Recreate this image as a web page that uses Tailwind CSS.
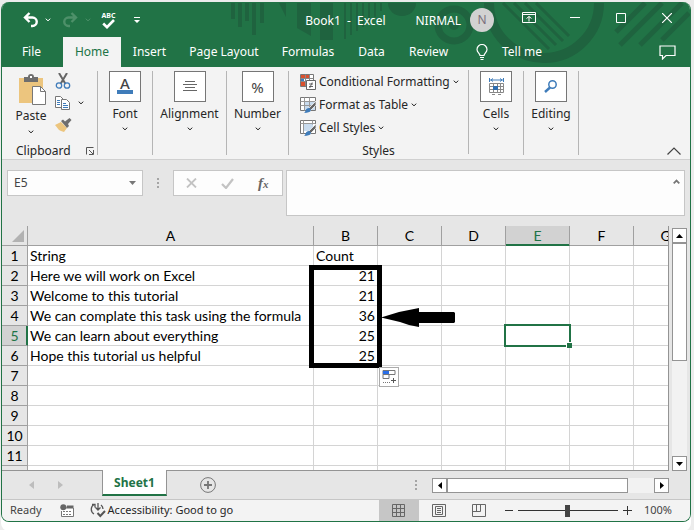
<!DOCTYPE html>
<html lang="en">
<head>
    <meta charset="UTF-8" />
    <meta name="viewport" content="width=device-width, initial-scale=1.0" />
    <title>Book1 - Excel</title>
    <script src="https://cdn.jsdelivr.net/npm/@tailwindcss/browser@4"></script>
</head>
<body class="bg-white font-['Noto_Sans','Open_Sans',sans-serif] text-xs text-[#262626]">
    <svg class="hidden">
        <symbol id="chev" viewBox="0 0 6 4"><path d="M.7 .7 3 2.800 5.300 .7" fill="none" stroke="currentColor" stroke-width="1" /></symbol>
    </svg>

    <div class="h-screen bg-[#ececec] pt-[2px] pr-[3px] pb-[8px] pl-px">
    <div class="flex h-full flex-col overflow-hidden rounded-lg border border-t-0 border-[#217346] bg-[#e6e6e6] shadow-[0_9px_0_0_white]">

        <!-- Title bar and tabs -->
        <header class="relative shrink-0 bg-[#217346] text-white">
            <svg class="absolute top-0 right-0 h-[65px] w-[460px]" viewBox="230 0 460 65" fill="none" stroke="#1f633f">
                <path d="M233 1v16M240 1v24M247 1v18M254 1v32M262 1v20" stroke-width="4" />
                <path d="M279 1h7v14zM297 1h14v33l-14-8zM320 1h13v37h-13z" fill="#1f633f" stroke="none" />
                <path d="M345 1v36M351 1v32M357 1v28M363 1v24M369 1v19M375 1v14M381 1v8" stroke-width="2" />
                <path d="M388 1h28a14 13 0 0 1-28 0z" fill="#1f633f" stroke="none" />
                <circle cx="454" cy="23" r="16" stroke-width="7" />
                <circle cx="454" cy="23" r="5" fill="#1f633f" stroke="none" />
                <path d="M489 1a55 55 0 0 0 110 0" stroke-width="10" />
                <path d="M503 1l46 46M514 1l42 42M525 1l38 38M536 1l33 33" stroke-width="3" />
                <path d="M620 43l42-42M640 43l42-42M616 30l29-29M662 38l27-27" stroke-width="5" />
            </svg>
            <div class="relative flex h-[35px] items-center">
                <button aria-label="Undo" class="ml-[21px]"><svg width="16" height="16" viewBox="0 0 16 16" fill="none" stroke="white" stroke-width="2.400"><path d="M6.500 1 2 5.500 6.500 10M2 5.500h7.500a4.200 4.200 0 0 1 0 8.500H8" /></svg></button>
                <button aria-label="Undo list" class="ml-[6px]"><svg width="6" height="4"><use href="#chev" /></svg></button>
                <button aria-label="Redo" class="ml-[11px]"><svg width="16" height="16" viewBox="0 0 16 16" fill="none" stroke="#4d9069" stroke-width="2.400"><path d="M9.500 1 14 5.500 9.500 10M14 5.500H6.500a4.200 4.200 0 0 0 0 8.500H8" /></svg></button>
                <button aria-label="Redo list" class="ml-[7px] text-[#4d9069]"><svg width="6" height="4"><use href="#chev" /></svg></button>
                <button aria-label="Spelling" class="ml-[10px] flex w-[15px] flex-col items-center pt-px">
                    <span class="text-[7px] leading-[7px] font-bold">ABC</span>
                    <svg width="13" height="10" viewBox="0 0 13 10"><path d="M1.200 4.500 5 8.200 12 1" fill="none" stroke="white" stroke-width="2.600" /></svg>
                </button>
                <button aria-label="Customize toolbar" class="ml-[18px] pt-[2px]"><svg width="6" height="7" viewBox="0 0 6 7"><path d="M0 0h6v1H0zM0 3h6L3 6z" fill="white" /></svg></button>
                <span class="flex-1"></span>
                <span class="pt-[2px] whitespace-pre">Book1  -  Excel</span>
                <span class="ml-[30px] pt-[2px]">NIRMAL</span>
                <span class="ml-[9px] flex size-6 items-center justify-center rounded-full bg-[#d2d2d2] text-[#7b6f7b]">N</span>
                <button aria-label="Ribbon options" class="ml-[28px] pb-[3px]"><svg width="14" height="12" viewBox="0 0 14 12" fill="none" stroke="white"><path d="M.5 .5h13v10H.5zM.5 2.500h13M7 9.500V4.500M4.500 6.500 7 4.500l2.500 2" /></svg></button>
                <button aria-label="Minimize" class="ml-[34px] pb-[5px]"><svg width="10" height="10" viewBox="0 0 10 10"><path d="M0 5.500h10" stroke="white" /></svg></button>
                <button aria-label="Maximize" class="ml-[36px] pb-[3px]"><svg width="10" height="10" viewBox="0 0 10 10"><path d="M.5 .5h9v9h-9z" fill="none" stroke="white" /></svg></button>
                <button aria-label="Close" class="mr-[18px] ml-[36px] pb-[3px]"><svg width="10" height="10" viewBox="0 0 10 10"><path d="M0 0 10 10M10 0 0 10" stroke="white" stroke-width="1.200" /></svg></button>
            </div>
            <nav class="relative flex h-[30px] items-center text-center leading-[30px]">
                <a href="#" class="w-[59px]">File</a>
                <a href="#" class="ml-[2px] w-[58px] bg-[#f3f3f3] text-[#217346]">Home</a>
                <a href="#" class="w-[57px]">Insert</a>
                <a href="#" class="w-[92px]">Page Layout</a>
                <a href="#" class="w-[76px]">Formulas</a>
                <a href="#" class="w-[51px]">Data</a>
                <a href="#" class="w-[63px]">Review</a>
                <a href="#" class="flex items-center gap-[14px] pl-[16px]">
                    <svg width="12" height="17" viewBox="0 0 12 17" fill="none" stroke="white" stroke-width="1.200"><path d="M4 11.500C4 9.500 1 8.500 1 5.500a5 5 0 0 1 10 0c0 3-3 4-3 6zM4 13.500h4M4.500 15.500h3" /></svg>
                    Tell me
                </a>
                <button aria-label="Comments" class="mr-[14px] ml-auto"><svg width="17" height="15" viewBox="0 0 17 15" fill="none" stroke="white" stroke-width="1.200"><path d="M1 1h15v9.500H7L3.500 14v-3.500H1z" /></svg></button>
            </nav>
        </header>

        <!-- Ribbon -->
        <section class="relative flex h-[93px] shrink-0 items-start border-b border-[#d0d0d0] bg-[#f3f3f3] pt-[4px] [&>div]:h-[84px]">
            <div class="relative w-[96px] border-r border-[#b5b5b5]">
                <div class="flex pl-[14px]">
                    <button class="flex w-[30px] flex-col items-center pt-[3px]">
                        <svg width="30" height="31" viewBox="0 0 30 31">
                            <path d="M3 4h24v25H3z" fill="#ecc57e" />
                            <path d="M8 3h4a3 3 0 0 1 6 0h4v5H8z" fill="#6e6e6e" /><path d="M14 2h2v2h-2z" fill="#fff" />
                            <path d="M16.500 12.500h8l5 5v13h-13z" fill="#fff" stroke="#777" /><path d="M24.500 12.500v5h5" fill="none" stroke="#777" />
                        </svg>
                        <span class="leading-[22px]">Paste</span>
                        <svg class="mt-[3px]" width="6" height="4"><use href="#chev" /></svg>
                    </button>
                    <div class="ml-[9px] flex flex-col gap-[6px] pt-[2px]">
                        <button aria-label="Cut"><svg width="16" height="16" viewBox="0 0 16 16" fill="none"><path d="M4 0 10.500 11M12 0 5.500 11" stroke="#666" stroke-width="2" /><circle cx="4" cy="12.500" r="2.700" stroke="#3f7cba" stroke-width="1.300" /><circle cx="12" cy="12.500" r="2.700" stroke="#3f7cba" stroke-width="1.300" /></svg></button>
                        <button aria-label="Copy" class="flex items-center gap-[7px]">
                            <svg width="16" height="16" viewBox="0 0 16 16" fill="#fff" stroke="#777"><path d="M.5 1.500h5l3 3v8h-8z" /><path d="M6.500 4.500h5l3 3v7h-8z" /><path d="M2 5.500h3M2 7.500h3M2 9.500h3M8 8.500h3M8 10.500h5M8 12.500h5" stroke="#3f7cba" /></svg>
                            <svg width="6" height="4"><use href="#chev" /></svg>
                        </button>
                        <button aria-label="Format Painter"><svg width="17" height="16" viewBox="0 0 17 16"><path d="M0 8 6 5l6 6-3 4-3-1-2-1z" fill="#ecc57e" /><path d="M6 4 8 2.500l2 2L14.500 1 16.500 3 13 7l1 2-2 2z" fill="#6e6e6e" /></svg></button>
                    </div>
                </div>
                <p class="absolute bottom-[-5px] left-[14px] leading-[18px]">Clipboard</p>
                <button aria-label="Clipboard settings" class="absolute right-[2px] bottom-0"><svg class="block" width="9" height="8" viewBox="0 0 9 8" fill="none" stroke="#555"><path d="M.5 7.500V.5h7M3 3l4 4M7.500 3v4.500H3" /></svg></button>
            </div>
            <div class="w-[55px] border-r border-[#b5b5b5]">
                <button class="flex w-full flex-col items-center">
                    <span class="flex h-[31px] w-8 flex-col items-center border border-[#767676] bg-white pt-[5px] text-[15px] leading-[13px] font-medium text-[#444]">A<svg class="block" width="16" height="4"><path d="M0 0h16v4H0z" fill="#3f7cba" /></svg></span>
                    <span class="leading-6">Font</span><svg class="mt-px" width="6" height="4"><use href="#chev" /></svg>
                </button>
            </div>
            <div class="w-[74px] border-r border-[#b5b5b5]">
                <button class="flex w-full flex-col items-center">
                    <span class="flex h-[31px] w-8 items-center justify-center border border-[#767676] bg-white"><svg width="14" height="13" viewBox="0 0 14 13"><path d="M2 1.500h10M0 4.500h14M2 7.500h10M0 10.500h14" stroke="#666" /></svg></span>
                    <span class="leading-6">Alignment</span><svg class="mt-px" width="6" height="4"><use href="#chev" /></svg>
                </button>
            </div>
            <div class="w-[62px] border-r border-[#b5b5b5]">
                <button class="flex w-full flex-col items-center">
                    <span class="flex h-[31px] w-8 items-center justify-center border border-[#767676] bg-white text-[15px] text-[#444]">%</span>
                    <span class="leading-6">Number</span><svg class="mt-px" width="6" height="4"><use href="#chev" /></svg>
                </button>
            </div>
            <div class="-mt-px w-[180px] border-r border-[#b5b5b5] pl-[11px]">
                <button class="flex h-[23px] items-center gap-[3px] whitespace-nowrap">
                    <svg width="16" height="16" viewBox="0 0 16 16"><path d="M.5 .5h13v12H.5z" fill="#fff" stroke="#777" /><path d="M1 1h8v3H1zM1 8h4v4H1z" fill="#d9502e" /><path d="M1 5h3v2H1z" fill="#3f7cba" /><path d="M.5 4.500h13M.5 7.500h13M5.500 .5v12M9.500 .5v12" stroke="#888" fill="none" /><path d="M6.500 6.500h9v9h-9z" fill="#fff" stroke="#666" /><path d="M9 10h4M9 12.500h4M12.200 8.500l-2.500 5.500" stroke="#555" stroke-width=".9" /></svg>
                    Conditional Formatting <svg width="6" height="4"><use href="#chev" /></svg>
                </button>
                <button class="flex h-[23px] items-center gap-[3px] whitespace-nowrap">
                    <svg width="16" height="16" viewBox="0 0 16 16"><path d="M.5 .5h15v13H.5z" fill="#fff" stroke="#777" /><path d="M5 4h10v9H5z" fill="#c9dcef" /><path d="M.5 4.500h15M.5 8.500h15M4.500 .5v13M9.500 .5v13" stroke="#999" fill="none" /><path d="M16 4v4l-6 6-2-2z" fill="#666" stroke="#fff" stroke-width=".7" /><path d="M4 16c2-1 1-5 5-5 3 1 3 5-5 5z" fill="#3f7cba" /></svg>
                    Format as Table <svg width="6" height="4"><use href="#chev" /></svg>
                </button>
                <button class="flex h-[23px] items-center gap-[3px] whitespace-nowrap">
                    <svg width="16" height="16" viewBox="0 0 16 16"><path d="M.5 .5h15v13H.5z" fill="#fff" stroke="#777" /><path d="M4 4h9v7H4z" fill="#c9dcef" /><path d="M.5 3.500h15M3.500 .5v13M12.500 .5v4" stroke="#999" fill="none" /><path d="M16 4v4l-6 6-2-2z" fill="#666" stroke="#fff" stroke-width=".7" /><path d="M4 16c2-1 1-5 5-5 3 1 3 5-5 5z" fill="#3f7cba" /></svg>
                    Cell Styles <svg width="6" height="4"><use href="#chev" /></svg>
                </button>
                <p class="pt-[3px] pr-[11px] text-center leading-[18px]">Styles</p>
            </div>
            <div class="w-[55px] border-r border-[#b5b5b5]">
                <button class="flex w-full flex-col items-center">
                    <span class="flex h-[31px] w-8 items-center justify-center border border-[#767676] bg-white"><svg width="15" height="17" viewBox="0 0 15 17" fill="none"><path d="M.5 0v4M14.500 0v4M1 2h13M4 .5 2 2l2 1.500M11 .5 13 2l-2 1.500" stroke="#3f7cba" /><path d="M.5 5.500h14v9H.5zM.5 8.500h14M.5 11.500h14M4.500 5.500v9M8.500 5.500v9M11.500 5.500v9M3 16.500h3M9 16.500h3" stroke="#888" /><path d="M4 8h5v4H4z" fill="#2f6eb0" /></svg></span>
                    <span class="leading-6">Cells</span><svg class="mt-px" width="6" height="4"><use href="#chev" /></svg>
                </button>
            </div>
            <div class="w-[55px] border-r border-[#b5b5b5]">
                <button class="flex w-full flex-col items-center">
                    <span class="flex h-[31px] w-8 items-center justify-center border border-[#767676] bg-white"><svg width="14" height="13" viewBox="0 0 14 13" fill="none" stroke="#3f7cba"><circle cx="8.500" cy="4.500" r="3.700" stroke-width="1.500" /><path d="M6 7.500 1 12" stroke-width="2.400" /></svg></span>
                    <span class="leading-6">Editing</span><svg class="mt-px" width="6" height="4"><use href="#chev" /></svg>
                </button>
            </div>
            <button aria-label="Collapse ribbon" class="absolute right-[9px] bottom-[4px]"><svg class="block" width="14" height="8" viewBox="0 0 14 8"><path d="M.5 7.500 7 1l6.500 6.500" fill="none" stroke="#444" stroke-width="1.200" /></svg></button>
        </section>

        <!-- Formula bar -->
        <section class="flex h-[66px] shrink-0 items-start pt-[10px] pr-[5px] pl-[5px]">
            <div class="flex h-[26px] w-[136px] items-center border border-[#c6c6c6] bg-[#fdfdfd] pr-[6px] pl-[6px]">
                <input aria-label="Name box" value="E5" class="min-w-0 flex-1 text-[#444] outline-none" />
                <svg width="7" height="4" viewBox="0 0 7 4"><path d="M0 0h7L3.500 4z" fill="#777" /></svg>
            </div>
            <svg class="ml-[14px]" width="2" height="26" viewBox="0 0 2 26"><path d="M0 8h2v2H0zM0 12h2v2H0zM0 16h2v2H0z" fill="#a5a5a5" /></svg>
            <div class="ml-[14px] flex h-[26px] w-[110px] items-center border border-[#c6c6c6] bg-[#fdfdfd] pl-[12px]">
                <button aria-label="Cancel"><svg width="11" height="10" viewBox="0 0 11 10"><path d="M1 .5 10 9.500M10 .5 1 9.500" stroke="#c3c3c3" stroke-width="1.800" /></svg></button>
                <button aria-label="Enter" class="ml-[24px]"><svg width="13" height="11" viewBox="0 0 13 11"><path d="M1 6l4 4L12 1" fill="none" stroke="#c3c3c3" stroke-width="2.200" /></svg></button>
                <button aria-label="Insert function" class="ml-[24px] font-['Liberation_Serif',serif] text-[15px] leading-4 font-bold text-[#666] italic">f<span class="text-[11px]">x</span></button>
            </div>
            <div class="ml-[3px] flex h-[46px] flex-1 border border-[#c6c6c6] bg-[#fdfdfd] pr-[4px]">
                <input aria-label="Formula" class="min-w-0 flex-1 px-1 outline-none" />
                <button aria-label="Collapse formula bar" class="mt-[8px] self-start"><svg class="block" width="7" height="5" viewBox="0 0 7 5"><path d="M.7 4.300 3.500 1.500 6.300 4.300" fill="none" stroke="#777" stroke-width="1.800" /></svg></button>
            </div>
        </section>

        <!-- Sheet -->
        <main class="flex min-h-0 flex-1">
            <div class="relative min-w-0 flex-1 overflow-hidden border-r border-b border-[#949494] bg-white">
                <table class="w-[696px] table-fixed border-separate border-spacing-0 font-[Lato,sans-serif] text-sm leading-[19px] text-black [&_td]:border-r [&_td]:border-b [&_td]:border-[#d4d4d4] [&_td]:px-[2px] [&_td]:whitespace-nowrap [&_th]:border-r [&_th]:border-b [&_th]:border-[#a0a0a0] [&_th]:bg-[#e6e6e6] [&_th]:font-normal [&_tr]:h-5">
                    <colgroup>
                        <col class="w-[26px]" /><col class="w-[286px]" /><col class="w-16" /><col class="w-16" /><col class="w-16" /><col class="w-16" /><col class="w-16" /><col class="w-16" />
                    </colgroup>
                    <thead>
                        <tr><th><svg class="ml-auto mr-[3px]" width="12" height="12"><path d="M12 0v12H0z" fill="#b2b2b2" /></svg></th><th>A</th><th>B</th><th>C</th><th>D</th><th class="border-b-[#217346]! bg-[#d2d2d2]! text-[#217346] shadow-[inset_0_-1px_0_#217346]">E</th><th>F</th><th>G</th></tr>
                    </thead>
                    <tbody>
                        <tr><th>1</th><td>String</td><td>Count</td><td></td><td></td><td></td><td></td><td></td></tr>
                        <tr><th>2</th><td>Here we will work on Excel</td><td class="text-right">21</td><td></td><td></td><td></td><td></td><td></td></tr>
                        <tr><th>3</th><td>Welcome to this tutorial</td><td class="text-right">21</td><td></td><td></td><td></td><td></td><td></td></tr>
                        <tr><th>4</th><td>We can complate this task using the formula</td><td class="text-right">36</td><td></td><td></td><td></td><td></td><td></td></tr>
                        <tr><th class="border-r-[#217346]! bg-[#d2d2d2]! text-[#217346] shadow-[inset_-1px_0_0_#217346]">5</th><td>We can learn about everything</td><td class="text-right">25</td><td></td><td></td><td></td><td></td><td></td></tr>
                        <tr><th>6</th><td>Hope this tutorial us helpful</td><td class="text-right">25</td><td></td><td></td><td></td><td></td><td></td></tr>
                        <tr><th>7</th><td></td><td></td><td></td><td></td><td></td><td></td><td></td></tr>
                        <tr><th>8</th><td></td><td></td><td></td><td></td><td></td><td></td><td></td></tr>
                        <tr><th>9</th><td></td><td></td><td></td><td></td><td></td><td></td><td></td></tr>
                        <tr><th>10</th><td></td><td></td><td></td><td></td><td></td><td></td><td></td></tr>
                        <tr><th>11</th><td></td><td></td><td></td><td></td><td></td><td></td><td></td></tr>
                        <tr><th></th><td></td><td></td><td></td><td></td><td></td><td></td><td></td></tr>
                    </tbody>
                </table>
                <!-- Selected cell E5 -->
                <div class="absolute top-[98px] left-[502px] h-[23px] w-[67px] border-2 border-[#217346]">
                    <span class="absolute -right-[3px] -bottom-[3px] size-[6px] border-t border-l border-white bg-[#217346]"></span>
                </div>
                <!-- Marked range and arrow -->
                <div class="absolute top-[39px] left-[307px] h-[103px] w-[73px] border-[5px] border-black"></div>
                <svg class="absolute top-[82px] left-[379px]" width="74" height="20" viewBox="0 0 74 20"><path d="M0 9.500 18 4l10-2 10-2v4h35l1 1v9l-1 1H38v4l-10-2-9-3z" /></svg>
                <button aria-label="Auto fill options" class="absolute top-[141px] left-[377px] flex size-5 items-center justify-center border border-[#ababab] bg-white"><svg width="15" height="14" viewBox="0 0 15 14" fill="none" stroke="#777"><path d="M1 .5h12v4H1zM1 4.500h6v4H1z" /><path d="M1 1h6v3H1z" fill="#2b6fe8" stroke="none" /><path d="M1 12.500h7" stroke-dasharray="1 1" /><path d="M9 10.500h5M11.500 8v5" stroke="#555" /></svg></button>
            </div>
            <div class="mt-[2px] mr-[3px] ml-[3px] flex w-[15px] flex-col bg-[#f2f2f2]">
                <button aria-label="Scroll up" class="flex h-[15px] items-center justify-center border border-[#949494] bg-white"><svg width="7" height="4"><path d="M3.500 0 7 4H0z" /></svg></button>
                <div class="h-[118px] border border-[#949494] bg-white"></div>
                <button aria-label="Scroll down" class="mt-auto flex h-[15px] items-center justify-center border border-[#949494] bg-white"><svg width="7" height="4"><path d="M0 0h7L3.500 4z" /></svg></button>
            </div>
        </main>

        <!-- Sheet tabs -->
        <div class="flex h-[28px] shrink-0 items-center pr-[21px]">
            <button aria-label="Previous sheet" class="ml-[27px]"><svg width="5" height="8"><path d="M5 0v8L0 4z" fill="#bdbdbd" /></svg></button>
            <button aria-label="Next sheet" class="ml-[24px]"><svg width="5" height="8"><path d="M0 0v8l5-4z" fill="#bdbdbd" /></svg></button>
            <a href="#" class="relative -mt-px ml-[39px] h-[26px] w-[65px] self-start border-x border-b-2 border-x-[#949494] border-b-[#217346] bg-white text-center leading-[26px] font-bold text-[#217346]">Sheet1</a>
            <button aria-label="New sheet" class="ml-[33px]"><svg width="16" height="16" viewBox="0 0 16 16" fill="none" stroke="#777"><circle cx="8" cy="8" r="7.400" /><path d="M8 4v8M4 8h8" stroke-width="1.800" /></svg></button>
            <svg class="mr-[15px] ml-auto" width="2" height="10"><path d="M0 0h2v2H0zM0 4h2v2H0zM0 8h2v2H0z" fill="#a5a5a5" /></svg>
            <div class="flex h-[15px] w-[237px] bg-[#f2f2f2]">
                <button aria-label="Scroll left" class="flex w-[15px] items-center justify-center border border-[#949494] bg-white"><svg width="4" height="7"><path d="M4 0v7L0 3.500z" /></svg></button>
                <div class="w-[181px] border border-[#949494] bg-white"></div>
                <button aria-label="Scroll right" class="ml-auto flex w-[15px] items-center justify-center border border-[#949494] bg-white"><svg width="4" height="7"><path d="M0 0v7l4-3.500z" /></svg></button>
            </div>
        </div>

        <!-- Status bar -->
        <footer class="flex h-[22px] shrink-0 items-center border-t border-[#c6c6c6] bg-[#f3f3f3] text-[11px] text-[#444]">
            <span class="ml-[8px]">Ready</span>
            <button aria-label="Record macro" class="ml-[18px]"><svg width="14" height="14" viewBox="0 0 14 14"><path d="M3 2h10v11H1.500V6" fill="#fff" /><path d="M7 1.500h6.500v3H6z" fill="#666" /><path d="M1.500 7v5.500h12V4" fill="none" stroke="#777" /><path d="M3 7.500h9M3 10.500h9" stroke="#777" stroke-dasharray="2 1" /><circle cx="3.300" cy="3.300" r="3" fill="#666" /></svg></button>
            <button class="ml-[16px] flex items-center gap-[2px] text-[#262626]">
                <svg width="16" height="15" viewBox="0 0 16 15" fill="none" stroke="#555" stroke-width="1.300"><path d="M4 1.500a5.500 5.500 0 0 0 0 9.500M2 1.500h3v3M8 0v7M5.500 4.500 8 7l2.500-2.500M11 2a5.500 5.500 0 0 1 2 4" /><path d="M7.500 10l2.800 3L15 8" stroke-width="2" /></svg>
                Accessibility: Good to go
            </button>
            <button aria-label="Normal view" class="ml-auto flex w-10 items-center justify-center self-stretch bg-[#c6c6c6]"><svg width="13" height="13" viewBox="0 0 13 13" fill="none" stroke="#666"><path d="M.5 .5h12v12H.5zM.5 4.500h12M.5 8.500h12M4.500 .5v12M8.500 .5v12" /></svg></button>
            <button aria-label="Page layout view" class="ml-[13px]"><svg width="14" height="13" viewBox="0 0 14 13" fill="none" stroke="#666"><path d="M.5 .5h13v12H.5zM3.500 2.500h7v8h-7zM5 4.500h4M5 6.500h4M5 8.500h4" /></svg></button>
            <button aria-label="Page break view" class="ml-[26px]"><svg width="14" height="13" viewBox="0 0 14 13" fill="none" stroke="#666"><path d="M.5 .5h13v12H.5zM.5 7.500h8M4.500 .5v7M8.500 .5v7" /></svg></button>
            <button aria-label="Zoom out" class="ml-[19px]"><svg width="8" height="9"><path d="M0 4.500h8" stroke="#333" /></svg></button>
            <input type="range" aria-label="Zoom" min="0" max="100" value="50" class="ml-[5px] h-[13px] w-[100px] appearance-none bg-[linear-gradient(#333,#333)] bg-[length:100%_1px] bg-center bg-no-repeat [&::-webkit-slider-thumb]:h-[12px] [&::-webkit-slider-thumb]:w-[5px] [&::-webkit-slider-thumb]:appearance-none [&::-webkit-slider-thumb]:bg-[#444]" />
            <button aria-label="Zoom in" class="ml-[5px]"><svg width="9" height="9"><path d="M0 4.500h9M4.500 0v9" stroke="#333" /></svg></button>
            <button class="mr-[18px] ml-[12px]">100%</button>
        </footer>
    </div>
    </div>
</body>
</html>
